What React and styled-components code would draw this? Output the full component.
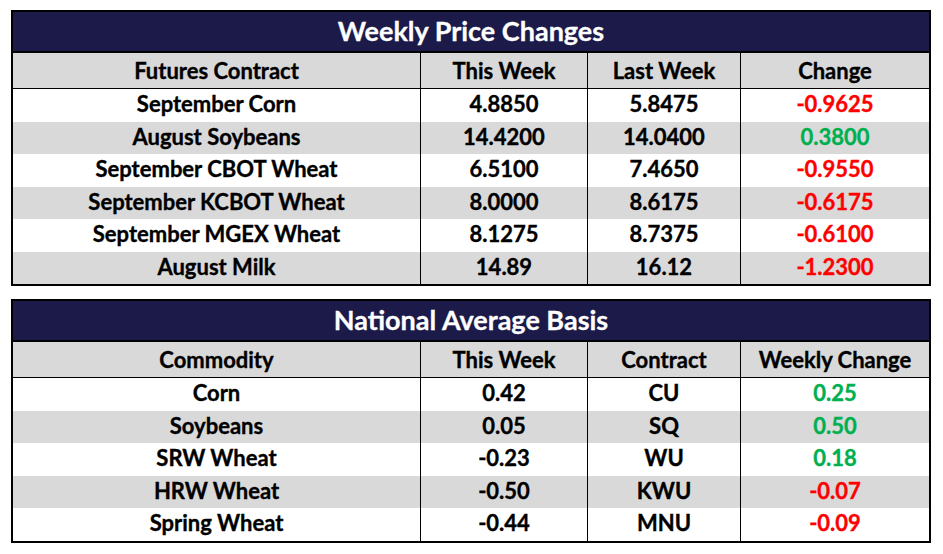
import React from "react";
import styled, { createGlobalStyle } from "styled-components";

const Global = createGlobalStyle`
  html, body { margin: 0; padding: 0; background: #ffffff; }
  body { font-family: "Lato", "Noto Sans", sans-serif; }
`;

const Page = styled.div`
  display: flex;
  flex-direction: column;
  gap: 13px;
  padding: 10px 0 0 11px;
  width: 920px;
`;

const Table = styled.div`
  border: 2px solid #000;
  display: grid;
  grid-template-columns: 407px 167px 153px 189px;
  background: #fff;
`;

const Title = styled.div`
  grid-column: 1 / -1;
  height: 41px;
  box-sizing: border-box;
  padding-bottom: 2px;
  background: #1b1a48;
  border-bottom: 2px solid #000;
  color: #fff;
  font-weight: 700;
  font-size: 27px;
  -webkit-text-stroke: 0.3px #fff;
  display: flex;
  align-items: center;
  justify-content: center;
  line-height: 1;
`;

const Cell = styled.div`
  box-sizing: border-box;
  height: ${(p) => (p.$head ? "36px" : "32.5px")};
  padding-bottom: ${(p) => (p.$head ? "0px" : "2px")};
  display: flex;
  align-items: center;
  justify-content: center;
  font-weight: 700;
  font-size: 22px;
  line-height: 1;
  color: ${(p) => (p.$tone === "neg" ? "#ff0000" : p.$tone === "pos" ? "#00b050" : "#000")};
  -webkit-text-stroke: 0.35px currentColor;
  background: ${(p) => (p.$shade ? "#d9d9d9" : "#ffffff")};
  border-left: ${(p) => (p.$first ? "none" : "1px solid #000")};
  border-bottom: ${(p) => (p.$head ? "1px solid #000" : "none")};
`;

const tone = (v) => (String(v).startsWith("-") ? "neg" : "pos");

const prices = [
  ["September Corn", "4.8850", "5.8475", "-0.9625"],
  ["August Soybeans", "14.4200", "14.0400", "0.3800"],
  ["September CBOT Wheat", "6.5100", "7.4650", "-0.9550"],
  ["September KCBOT Wheat", "8.0000", "8.6175", "-0.6175"],
  ["September MGEX Wheat", "8.1275", "8.7375", "-0.6100"],
  ["August Milk", "14.89", "16.12", "-1.2300"],
];

const basis = [
  ["Corn", "0.42", "CU", "0.25"],
  ["Soybeans", "0.05", "SQ", "0.50"],
  ["SRW Wheat", "-0.23", "WU", "0.18"],
  ["HRW Wheat", "-0.50", "KWU", "-0.07"],
  ["Spring Wheat", "-0.44", "MNU", "-0.09"],
];

function DataTable({ title, headers, rows }) {
  return (
    <Table>
      <Title>{title}</Title>
      {headers.map((h, i) => (
        <Cell key={h} $head $shade $first={i === 0}>
          {h}
        </Cell>
      ))}
      {rows.map((r, ri) =>
        r.map((v, ci) => (
          <Cell
            key={`${ri}-${ci}`}
            $first={ci === 0}
            $shade={ri % 2 === 1}
            $tone={ci === 3 ? tone(v) : undefined}
          >
            {v}
          </Cell>
        ))
      )}
    </Table>
  );
}

export default function App() {
  return (
    <>
      <Global />
      <Page>
        <DataTable
          title="Weekly Price Changes"
          headers={["Futures Contract", "This Week", "Last Week", "Change"]}
          rows={prices}
        />
        <DataTable
          title="National Average Basis"
          headers={["Commodity", "This Week", "Contract", "Weekly Change"]}
          rows={basis}
        />
      </Page>
    </>
  );
}
